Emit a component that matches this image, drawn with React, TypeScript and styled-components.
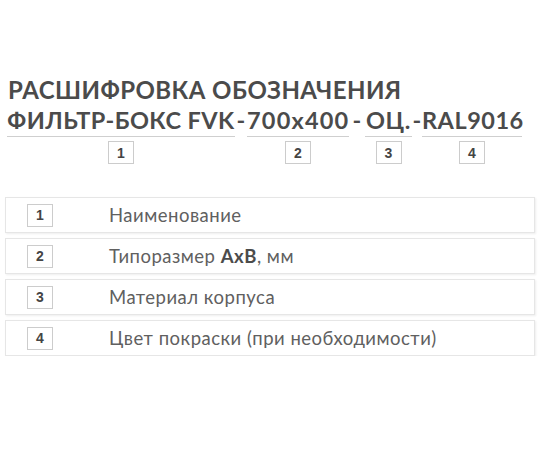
import React from "react";
import styled, { createGlobalStyle } from "styled-components";

const Global = createGlobalStyle`
  html, body { margin: 0; padding: 0; background: #fff; }
  body { font-family: "Lato", "Noto Sans", sans-serif; }
`;

const Page = styled.div`
  padding: 75px 8px 0 5px;
  width: 550px;
  box-sizing: border-box;
`;

const Title = styled.h1`
  margin: 0 0 0 3px;
  font-family: "Lato", "Noto Sans", sans-serif;
  font-weight: 700;
  font-size: 24px;
  line-height: 30px;
  color: #4b4b4b;
  letter-spacing: 0.45px;
`;

const CodeLine = styled.div`
  display: flex;
  align-items: flex-start;
  margin-left: 2px;
`;

const Segment = styled.div<{ $w: number }>`
  display: flex;
  flex-direction: column;
  align-items: center;
  width: ${(p) => p.$w}px;
`;

const SegText = styled.div<{ $ls: number }>`
  align-self: stretch;
  text-align: center;
  font-weight: 700;
  font-size: 23.5px;
  line-height: 30px;
  color: #4b4b4b;
  padding-bottom: 1px;
  border-bottom: 1px solid #cfcfcf;
  white-space: nowrap;
  letter-spacing: ${(p) => p.$ls}px;
`;

const Dash = styled.div<{ $w: number }>`
  width: ${(p) => p.$w}px;
  text-align: center;
  font-weight: 700;
  font-size: 23.5px;
  line-height: 30px;
  color: #4b4b4b;
`;

const NumBox = styled.div`
  width: 24px;
  height: 21px;
  border: 1px solid #cccccc;
  display: flex;
  align-items: center;
  justify-content: center;
  font-family: "Liberation Sans", Arial, sans-serif;
  font-weight: 700;
  font-size: 14px;
  color: #444;
  background: #fff;
  margin-top: 4px;
`;

const List = styled.div`
  margin-top: 33px;
  display: flex;
  flex-direction: column;
  gap: 5px;
  width: 530px;
`;

const Row = styled.div`
  height: 34px;
  border: 1px solid #e6e6e6;
  box-shadow: 1px 1px 2px rgba(0, 0, 0, 0.07);
  display: flex;
  align-items: center;
  padding-left: 21px;
`;

const RowBox = styled(NumBox)`
  margin-top: 0;
`;

const RowText = styled.div`
  margin-left: 56px;
  font-family: "Lato", "Noto Sans", sans-serif;
  font-weight: 400;
  font-size: 18.5px;
  color: #606060;
  letter-spacing: 0.5px;
  b {
    font-weight: 700;
    color: #4b4b4b;
  }
`;

const segments = [
  { text: "ФИЛЬТР-БОКС FVK", w: 228, n: 1, ls: 0.45 },
  { text: "700x400", w: 102, n: 2, ls: 1.2 },
  { text: "ОЦ.", w: 47, n: 3, ls: 0.6 },
  { text: "RAL9016", w: 100, n: 4, ls: 0.5 },
];

const dashWidths = [12, 16, 10];

export default function App() {
  return (
    <>
      <Global />
      <Page>
        <Title>РАСШИФРОВКА ОБОЗНАЧЕНИЯ</Title>
        <CodeLine>
          {segments.map((s, i) => (
            <React.Fragment key={s.n}>
              <Segment $w={s.w}>
                <SegText $ls={s.ls}>{s.text}</SegText>
                <NumBox>{s.n}</NumBox>
              </Segment>
              {i < segments.length - 1 && <Dash $w={dashWidths[i]}>-</Dash>}
            </React.Fragment>
          ))}
        </CodeLine>
        <List>
          <Row>
            <RowBox>1</RowBox>
            <RowText>Наименование</RowText>
          </Row>
          <Row>
            <RowBox>2</RowBox>
            <RowText>
              Типоразмер <b>AxB</b>, мм
            </RowText>
          </Row>
          <Row>
            <RowBox>3</RowBox>
            <RowText>Материал корпуса</RowText>
          </Row>
          <Row>
            <RowBox>4</RowBox>
            <RowText>Цвет покраски (при необходимости)</RowText>
          </Row>
        </List>
      </Page>
    </>
  );
}
